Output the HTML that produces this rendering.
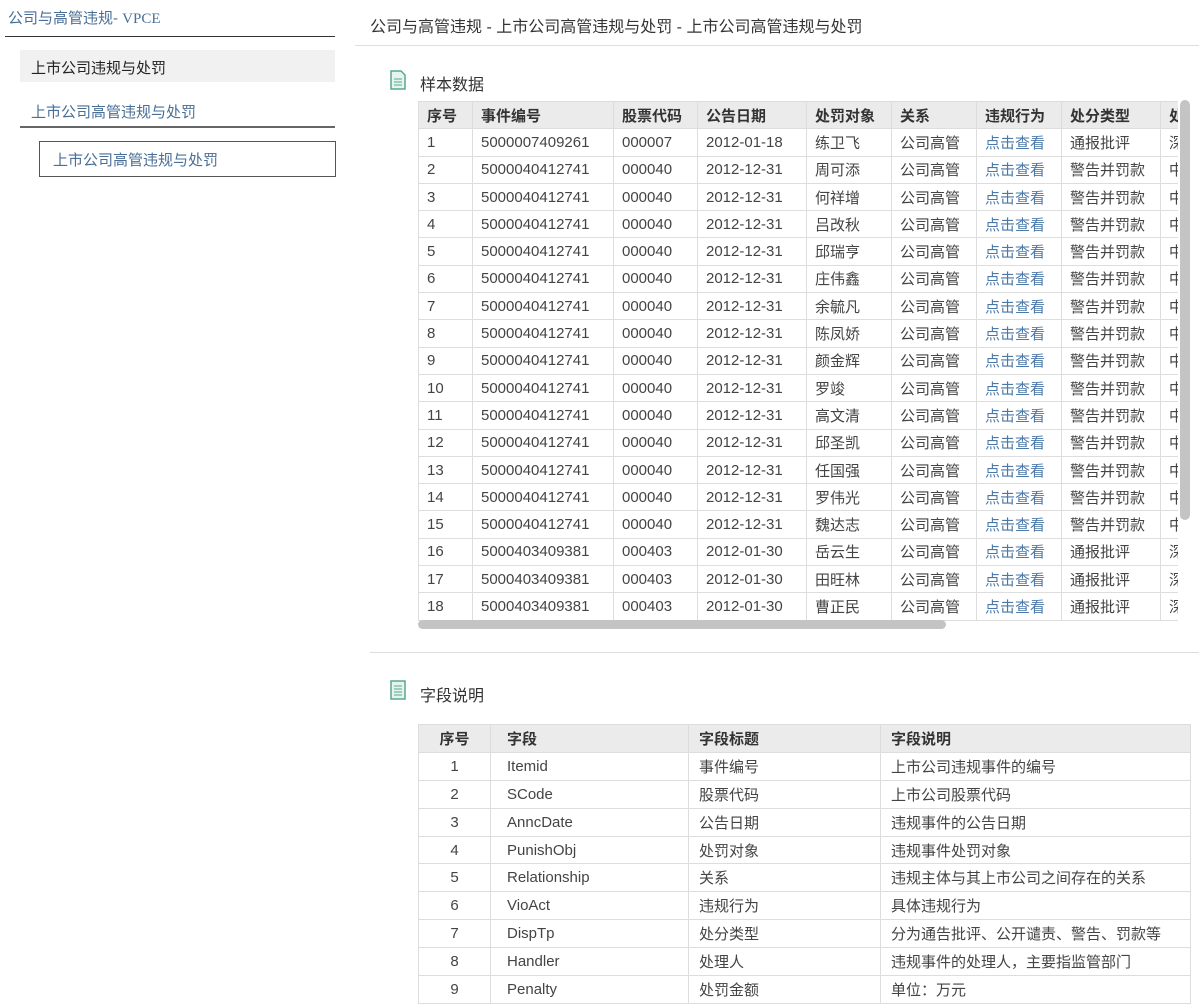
<!DOCTYPE html>
<html><head><meta charset="utf-8"><style>
body{margin:0;width:1199px;height:1006px;background:#fff;font-family:"Liberation Sans","Noto Sans CJK SC",sans-serif;color:#333;position:relative;overflow:hidden}
.a{position:absolute}
table{border-collapse:collapse;table-layout:fixed;font-size:15px}
td,th{border:1px solid #ddd;padding:0 0 0 8px;white-space:nowrap;overflow:hidden;text-align:left;color:#444}
th{background:#ebebeb;font-weight:bold;color:#333}
.t1 tr{height:27.3px}
.t2 tr{height:27.9px}
.lk{color:#4a78a8}
.t2 td.c,.t2 th.c{text-align:center;padding:0}
</style></head><body>
<div class="a" style="left:8px;top:7px;font-size:15px;color:#4a6f96">公司与高管违规- <span style="font-family:'Liberation Serif',serif">VPCE</span></div>
<div class="a" style="left:5px;top:36px;width:330px;height:1px;background:#333"></div>
<div class="a" style="left:20px;top:50px;width:315px;height:32px;background:#f1f1f1"></div>
<div class="a" style="left:31px;top:57px;font-size:15px;color:#222">上市公司违规与处罚</div>
<div class="a" style="left:31px;top:101px;font-size:15px;color:#4a6f96">上市公司高管违规与处罚</div>
<div class="a" style="left:20px;top:126px;width:315px;height:2px;background:#666"></div>
<div class="a" style="left:39px;top:141px;width:295px;height:34px;border:1px solid #555"></div>
<div class="a" style="left:53px;top:149px;font-size:15px;color:#4a6f96">上市公司高管违规与处罚</div>

<div class="a" style="left:370px;top:13px;font-size:16px;color:#333">公司与高管违规 - 上市公司高管违规与处罚 - 上市公司高管违规与处罚</div>
<div class="a" style="left:355px;top:45px;width:844px;height:1px;background:#ddd"></div>

<svg class="a" style="left:390px;top:70px" width="16" height="20" viewBox="0 0 16 20"><path d="M1 1h10l4 4v14H1z" fill="#e6f4ef" stroke="#5aa88e" stroke-width="1.5"/><path d="M4 9h8M4 12h8M4 15h8" stroke="#5aa88e"/></svg>
<div class="a" style="left:420px;top:71px;font-size:16px;color:#333">样本数据</div>

<div class="a" style="left:418px;top:101px;width:760px;height:520px;overflow:hidden">
<table class="t1" style="width:860px">
<colgroup><col style="width:54px"><col style="width:141px"><col style="width:84px"><col style="width:109px"><col style="width:85px"><col style="width:85px"><col style="width:85px"><col style="width:99px"><col style="width:118px"></colgroup>
<tr><th>序号</th><th>事件编号</th><th>股票代码</th><th>公告日期</th><th>处罚对象</th><th>关系</th><th>违规行为</th><th>处分类型</th><th>处罚机构</th></tr>
<tr><td>1</td><td>5000007409261</td><td>000007</td><td>2012-01-18</td><td>练卫飞</td><td>公司高管</td><td class="lk">点击查看</td><td>通报批评</td><td>深交所</td></tr>
<tr><td>2</td><td>5000040412741</td><td>000040</td><td>2012-12-31</td><td>周可添</td><td>公司高管</td><td class="lk">点击查看</td><td>警告并罚款</td><td>中国证监会</td></tr>
<tr><td>3</td><td>5000040412741</td><td>000040</td><td>2012-12-31</td><td>何祥增</td><td>公司高管</td><td class="lk">点击查看</td><td>警告并罚款</td><td>中国证监会</td></tr>
<tr><td>4</td><td>5000040412741</td><td>000040</td><td>2012-12-31</td><td>吕改秋</td><td>公司高管</td><td class="lk">点击查看</td><td>警告并罚款</td><td>中国证监会</td></tr>
<tr><td>5</td><td>5000040412741</td><td>000040</td><td>2012-12-31</td><td>邱瑞亨</td><td>公司高管</td><td class="lk">点击查看</td><td>警告并罚款</td><td>中国证监会</td></tr>
<tr><td>6</td><td>5000040412741</td><td>000040</td><td>2012-12-31</td><td>庄伟鑫</td><td>公司高管</td><td class="lk">点击查看</td><td>警告并罚款</td><td>中国证监会</td></tr>
<tr><td>7</td><td>5000040412741</td><td>000040</td><td>2012-12-31</td><td>余毓凡</td><td>公司高管</td><td class="lk">点击查看</td><td>警告并罚款</td><td>中国证监会</td></tr>
<tr><td>8</td><td>5000040412741</td><td>000040</td><td>2012-12-31</td><td>陈凤娇</td><td>公司高管</td><td class="lk">点击查看</td><td>警告并罚款</td><td>中国证监会</td></tr>
<tr><td>9</td><td>5000040412741</td><td>000040</td><td>2012-12-31</td><td>颜金辉</td><td>公司高管</td><td class="lk">点击查看</td><td>警告并罚款</td><td>中国证监会</td></tr>
<tr><td>10</td><td>5000040412741</td><td>000040</td><td>2012-12-31</td><td>罗竣</td><td>公司高管</td><td class="lk">点击查看</td><td>警告并罚款</td><td>中国证监会</td></tr>
<tr><td>11</td><td>5000040412741</td><td>000040</td><td>2012-12-31</td><td>高文清</td><td>公司高管</td><td class="lk">点击查看</td><td>警告并罚款</td><td>中国证监会</td></tr>
<tr><td>12</td><td>5000040412741</td><td>000040</td><td>2012-12-31</td><td>邱圣凯</td><td>公司高管</td><td class="lk">点击查看</td><td>警告并罚款</td><td>中国证监会</td></tr>
<tr><td>13</td><td>5000040412741</td><td>000040</td><td>2012-12-31</td><td>任国强</td><td>公司高管</td><td class="lk">点击查看</td><td>警告并罚款</td><td>中国证监会</td></tr>
<tr><td>14</td><td>5000040412741</td><td>000040</td><td>2012-12-31</td><td>罗伟光</td><td>公司高管</td><td class="lk">点击查看</td><td>警告并罚款</td><td>中国证监会</td></tr>
<tr><td>15</td><td>5000040412741</td><td>000040</td><td>2012-12-31</td><td>魏达志</td><td>公司高管</td><td class="lk">点击查看</td><td>警告并罚款</td><td>中国证监会</td></tr>
<tr><td>16</td><td>5000403409381</td><td>000403</td><td>2012-01-30</td><td>岳云生</td><td>公司高管</td><td class="lk">点击查看</td><td>通报批评</td><td>深交所</td></tr>
<tr><td>17</td><td>5000403409381</td><td>000403</td><td>2012-01-30</td><td>田旺林</td><td>公司高管</td><td class="lk">点击查看</td><td>通报批评</td><td>深交所</td></tr>
<tr><td>18</td><td>5000403409381</td><td>000403</td><td>2012-01-30</td><td>曹正民</td><td>公司高管</td><td class="lk">点击查看</td><td>通报批评</td><td>深交所</td></tr>
</table></div>
<div class="a" style="left:1180px;top:100px;width:10px;height:420px;background:#c4c4c4;border-radius:5px"></div>
<div class="a" style="left:418px;top:620px;width:528px;height:9px;background:#c4c4c4;border-radius:5px"></div>

<div class="a" style="left:370px;top:652px;width:829px;height:1px;background:#ddd"></div>

<svg class="a" style="left:390px;top:680px" width="16" height="20" viewBox="0 0 16 20"><path d="M1 1h14v18H1z" fill="#e6f4ef" stroke="#5aa88e" stroke-width="1.5"/><path d="M4 6h8M4 9h8M4 12h8M4 15h8" stroke="#5aa88e"/></svg>
<div class="a" style="left:420px;top:682px;font-size:16px;color:#333">字段说明</div>

<table class="t2 a" style="left:418px;top:724px;width:772px;border:1px solid #bbb">
<colgroup><col style="width:72px"><col style="width:198px"><col style="width:192px"><col style="width:310px"></colgroup>
<tr><th class="c">序号</th><th style="padding-left:16px">字段</th><th style="padding-left:10px">字段标题</th><th style="padding-left:10px">字段说明</th></tr>
<tr><td class="c">1</td><td style="padding-left:16px">Itemid</td><td style="padding-left:10px">事件编号</td><td style="padding-left:10px">上市公司违规事件的编号</td></tr>
<tr><td class="c">2</td><td style="padding-left:16px">SCode</td><td style="padding-left:10px">股票代码</td><td style="padding-left:10px">上市公司股票代码</td></tr>
<tr><td class="c">3</td><td style="padding-left:16px">AnncDate</td><td style="padding-left:10px">公告日期</td><td style="padding-left:10px">违规事件的公告日期</td></tr>
<tr><td class="c">4</td><td style="padding-left:16px">PunishObj</td><td style="padding-left:10px">处罚对象</td><td style="padding-left:10px">违规事件处罚对象</td></tr>
<tr><td class="c">5</td><td style="padding-left:16px">Relationship</td><td style="padding-left:10px">关系</td><td style="padding-left:10px">违规主体与其上市公司之间存在的关系</td></tr>
<tr><td class="c">6</td><td style="padding-left:16px">VioAct</td><td style="padding-left:10px">违规行为</td><td style="padding-left:10px">具体违规行为</td></tr>
<tr><td class="c">7</td><td style="padding-left:16px">DispTp</td><td style="padding-left:10px">处分类型</td><td style="padding-left:10px">分为通告批评、公开谴责、警告、罚款等</td></tr>
<tr><td class="c">8</td><td style="padding-left:16px">Handler</td><td style="padding-left:10px">处理人</td><td style="padding-left:10px">违规事件的处理人，主要指监管部门</td></tr>
<tr><td class="c">9</td><td style="padding-left:16px">Penalty</td><td style="padding-left:10px">处罚金额</td><td style="padding-left:10px">单位：万元</td></tr>
</table>
</body></html>
